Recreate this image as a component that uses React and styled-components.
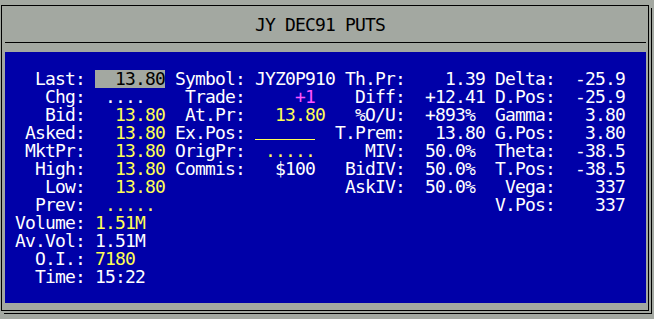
import React from 'react'
import styled, { createGlobalStyle } from 'styled-components'

const GRAY = '#a3a8a1'
const BLUE = '#0000a8'
const YELLOW = '#ffff55'
const MAGENTA = '#ff55ff'
const WHITE = '#ffffff'

const Global = createGlobalStyle`
  html, body {
    margin: 0;
    background: ${GRAY};
  }
  body {
    font-family: "DejaVu Sans Mono", "Liberation Mono", monospace;
    font-size: 18px;
    letter-spacing: -0.84px;
    line-height: 18px;
  }
`

const Screen = styled.div`
  width: 654px;
  height: 319px;
  padding: 5px 0 0 1px;
  box-sizing: border-box;
`

const Window = styled.div`
  width: 648px;
  height: 306px;
  box-sizing: border-box;
  border: 1px solid #000;
  background: ${GRAY};
  box-shadow: 2px 2px 0 ${GRAY}, 3px 3px 0 #000;
  display: flex;
  flex-direction: column;
`

const Title = styled.div`
  height: 36px;
  box-sizing: border-box;
  padding: 10px 10px 0 0;
  text-align: center;
  color: #000;
  white-space: pre;
`

const Rule = styled.div`
  height: 1px;
  margin: 0 2px 0 3px;
  background: #000;
`

const Panel = styled.div`
  margin: 9px 2px 0 3px;
  height: 251px;
  background: ${BLUE};
  padding: 18px 0 0 10px;
  box-sizing: border-box;
  display: flex;
  gap: 10px;
  align-items: flex-start;
`

const Section = styled.div`
  display: grid;
  grid-template-columns: ${p => p.$label}px 70px;
  column-gap: ${p => p.$gap}px;
  grid-auto-rows: 18px;
`

const Label = styled.span`
  color: ${WHITE};
  text-align: right;
  white-space: pre;
`

const Value = styled.span`
  color: ${p => p.$color || WHITE};
  background: ${p => (p.$hilite ? GRAY : 'transparent')};
  text-align: ${p => (p.$left ? 'left' : 'right')};
  white-space: pre;
  overflow: visible;
`

const Blank = styled.span`
  justify-self: start;
  width: 60px;
  height: 15px;
  border-bottom: 1px solid ${YELLOW};
`

const left = [
  ['Last:', '13.80', { $hilite: true, $color: '#000' }],
  ['Chg:', ' ....', { $left: true }],
  ['Bid:', '13.80', { $color: YELLOW }],
  ['Asked:', '13.80', { $color: YELLOW }],
  ['MktPr:', '13.80', { $color: YELLOW }],
  ['High:', '13.80', { $color: YELLOW }],
  ['Low:', '13.80', { $color: YELLOW }],
  ['Prev:', ' .....', { $left: true, $color: YELLOW }],
  ['Volume:', '1.51M', { $left: true, $color: YELLOW }],
  ['Av.Vol:', '1.51M', { $left: true }],
  ['O.I.:', '7180', { $left: true, $color: YELLOW }],
  ['Time:', '15:22', { $left: true }],
]

const trade = [
  ['Symbol:', 'JYZ0P910', { $left: true }],
  ['Trade:', '+1 ', { $color: MAGENTA }],
  ['At.Pr:', '13.80', { $color: YELLOW }],
  ['Ex.Pos:', null],
  ['OrigPr:', '..... ', { $color: YELLOW }],
  ['Commis:', '$100 '],
]

const theo = [
  ['Th.Pr:', '1.39'],
  ['Diff:', '+12.41'],
  ['%O/U:', '+893% '],
  ['T.Prem:', '13.80'],
  ['MIV:', '50.0% '],
  ['BidIV:', '50.0% '],
  ['AskIV:', '50.0% '],
]

const greeks = [
  ['Delta:', '-25.9'],
  ['D.Pos:', '-25.9'],
  ['Gamma:', '3.80'],
  ['G.Pos:', '3.80'],
  ['Theta:', '-38.5'],
  ['T.Pos:', '-38.5'],
  ['Vega:', '337'],
  ['V.Pos:', '337'],
]

const Fields = ({ rows, label = 70, gap = 10 }) => (
  <Section $label={label} $gap={gap}>
    {rows.map(([name, value, props]) => (
      <React.Fragment key={name}>
        <Label>{name}</Label>
        {value === null ? <Blank /> : <Value {...props}>{value}</Value>}
      </React.Fragment>
    ))}
  </Section>
)

export default function App() {
  return (
    <>
      <Global />
      <Screen>
        <Window>
          <Title>JY DEC91 PUTS</Title>
          <Rule />
          <Panel>
            <Fields rows={left} />
            <Fields rows={trade} />
            <Fields rows={theo} />
            <Fields rows={greeks} label={60} gap={0} />
          </Panel>
        </Window>
      </Screen>
    </>
  )
}
